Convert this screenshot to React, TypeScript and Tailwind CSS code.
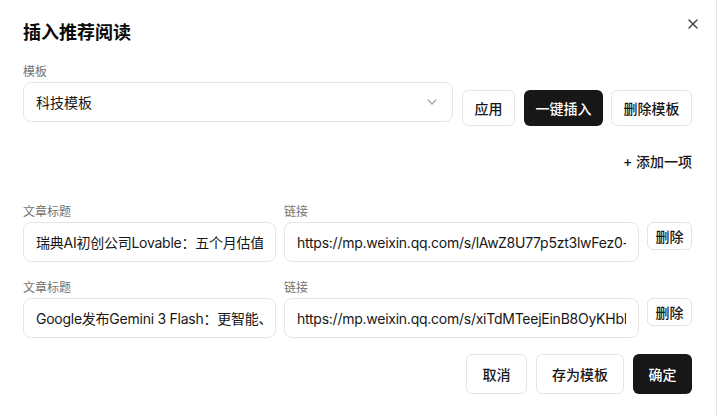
import React from "react";
import { X, ChevronDown } from "lucide-react";

const font = { fontFamily: 'Inter, "Noto Sans CJK SC", sans-serif' };

function Label({ children }: { children: React.ReactNode }) {
  return <div className="h-[20px] text-[12px] leading-[20px] text-[#737373]">{children}</div>;
}

function TextBox({ value, className }: { value: string; className: string }) {
  return (
    <input
      readOnly
      value={value}
      style={font}
      className={`h-[40px] rounded-lg border border-[#e5e5e5] bg-white px-3 text-[14px] tracking-[-0.25px] text-[#171717] outline-none ${className}`}
    />
  );
}

function ArticleRow({ title, link }: { title: string; link: string }) {
  return (
    <div className="flex items-start">
      <div className="flex w-[253px] flex-col">
        <Label>文章标题</Label>
        <TextBox value={title} className="w-[253px]" />
      </div>
      <div className="ml-[8px] flex flex-1 flex-col">
        <Label>链接</Label>
        <TextBox value={link} className="w-full" />
      </div>
      <button className="ml-[8px] mt-[20px] h-[28px] w-[45px] rounded-md border border-[#e5e5e5] bg-white text-[14px] font-medium text-[#171717]">
        删除
      </button>
    </div>
  );
}

export default function App() {
  return (
    <div style={font} className="h-[416px] w-[718px] overflow-hidden bg-white">
      <div className="flex h-full w-[717px] flex-col border-r border-[#e5e5e5] px-[23px] pr-[24px]">
        <div className="flex items-center justify-between pt-[21px]">
          <h2 className="text-[18px] font-bold leading-[24px] text-[#0a0a0a]">插入推荐阅读</h2>
          <X size={16} strokeWidth={2} className="mr-[-9px] mt-[-19px] text-[#404040]" />
        </div>

        <div className="mt-[17px] flex items-start">
          <div className="flex w-[430px] flex-col">
            <Label>模板</Label>
            <div className="flex h-[40px] items-center justify-between rounded-lg border border-[#e5e5e5] bg-white pl-3 pr-[12px] text-[14px] text-[#171717]">
              <span>科技模板</span>
              <ChevronDown size={16} className="text-[#a3a3a3]" />
            </div>
          </div>
          <div className="ml-[9px] mt-[28px] flex gap-2">
            <button className="h-[36px] w-[53px] rounded-md border border-[#e5e5e5] bg-white text-[14px] font-medium text-[#171717]">
              应用
            </button>
            <button className="ml-[1px] h-[36px] w-[79px] rounded-md bg-[#171717] text-[14px] font-medium text-white">
              一键插入
            </button>
            <button className="h-[36px] w-[81px] rounded-md border border-[#e5e5e5] bg-white text-[14px] font-medium text-[#171717]">
              删除模板
            </button>
          </div>
        </div>

        <div className="mt-[26px] flex justify-end">
          <button className="h-[20px] text-[14px] font-medium leading-[20px] text-[#171717]">+ 添加一项</button>
        </div>

        <div className="mt-[30px] flex flex-col gap-[16px]">
          <ArticleRow
            title="瑞典AI初创公司Lovable：五个月估值翻三倍"
            link="https://mp.weixin.qq.com/s/lAwZ8U77p5zt3lwFez0-abc"
          />
          <ArticleRow
            title="Google发布Gemini 3 Flash：更智能、更快速"
            link="https://mp.weixin.qq.com/s/xiTdMTeejEinB8OyKHbEq1"
          />
        </div>

        <div className="mt-[16px] flex justify-end gap-[9px]">
          <button className="h-[40px] w-[61px] rounded-md border border-[#e5e5e5] bg-white text-[14px] font-medium text-[#171717]">
            取消
          </button>
          <button className="h-[40px] w-[88px] rounded-md border border-[#e5e5e5] bg-white text-[14px] font-medium text-[#171717]">
            存为模板
          </button>
          <button className="h-[40px] w-[59px] rounded-md bg-[#171717] text-[14px] font-medium text-white">
            确定
          </button>
        </div>
      </div>
    </div>
  );
}
